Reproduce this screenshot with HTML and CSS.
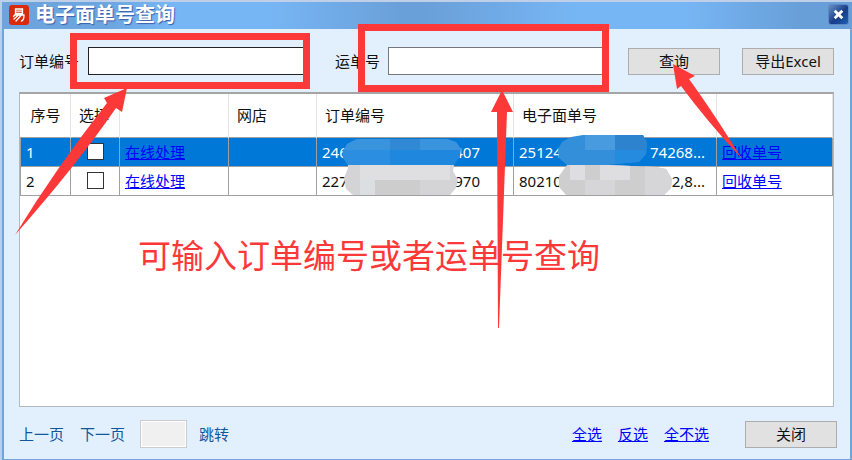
FILE: index.html
```html
<!DOCTYPE html>
<html lang="zh-CN">
<head>
<meta charset="utf-8">
<title>电子面单号查询</title>
<link rel="stylesheet" href="styles.css">
</head>
<body>
<div class="window">
  <header class="titlebar">
    <svg class="logo" viewBox="0 0 20 20" aria-hidden="true">
      <rect width="20" height="20" rx="3" fill="#d92a0c"/>
      <path d="M6.500 4h7v4.500h-7zM6.500 6.200h7M7 8.500L4.500 11.500M6.500 10h8.500c0 3-.6 5.500-2.500 6M9 10.500L5 14M12 10.500L7 16" fill="none" stroke="#fff" stroke-width="1.300" stroke-linecap="round"/>
    </svg>
    <h1>电子面单号查询</h1>
    <button class="close" type="button" aria-label="关闭窗口">
      <svg viewBox="0 0 20 20" aria-hidden="true"><path d="M6 6l8 8M14 6l-8 8" stroke="#fff" stroke-width="3"/></svg>
    </button>
  </header>
  <main>
    <form class="search">
      <label for="order">订单编号</label>
      <input class="order" id="order" type="text">
      <label class="waybill-label" for="waybill">运单号</label>
      <input id="waybill" type="text">
      <div class="actions">
        <button class="btn" type="button">查询</button>
        <button class="btn" type="button">导出<span class="latin">Excel</span></button>
      </div>
    </form>
    <div class="grid">
      <table>
        <colgroup><col class="c-no"><col class="c-pick"><col class="c-do"><col class="c-shop"><col class="c-order"><col class="c-bill"><col></colgroup>
        <thead>
          <tr><th>序号</th><th>选择</th><th></th><th>网店</th><th>订单编号</th><th>电子面单号</th><th></th></tr>
        </thead>
        <tbody>
          <tr class="selected">
            <td>1</td>
            <td class="pick"><input type="checkbox" aria-label="选择第1行"></td>
            <td><a href="#">在线处理</a></td>
            <td></td>
            <td><div class="number"><span>246</span><span>407</span></div></td>
            <td><div class="number long"><span>25124</span><span>74268...</span></div></td>
            <td><a href="#">回收单号</a></td>
          </tr>
          <tr>
            <td>2</td>
            <td class="pick"><input type="checkbox" aria-label="选择第2行"></td>
            <td><a href="#">在线处理</a></td>
            <td></td>
            <td><div class="number"><span>227</span><span>970</span></div></td>
            <td><div class="number long"><span>80210</span><span>2,8...</span></div></td>
            <td><a href="#">回收单号</a></td>
          </tr>
        </tbody>
      </table>
    </div>
    <footer>
      <button class="page" type="button">上一页</button>
      <button class="page" type="button">下一页</button>
      <input class="jump" type="text" aria-label="页码">
      <button class="page" type="button">跳转</button>
      <nav><a href="#">全选</a><a href="#">反选</a><a href="#">全不选</a></nav>
      <button class="btn" type="button">关闭</button>
    </footer>
  </main>
</div>
<svg class="marks" width="852" height="460" viewBox="0 0 852 460" aria-hidden="true">
  <defs>
    <clipPath id="m1"><path d="M357 139H447L456 142L461 149L460 156L454 165H348L343 158V151L347 144Z"/></clipPath>
    <clipPath id="m2"><path d="M348 165H454L453 171L458 180L456 188L450 195H353L346 189L344 178L348 168Z"/></clipPath>
    <clipPath id="m3"><path d="M583 135H643L647 143L646 154L639 162L626 163L608 165H567L559 158L558 149L562 142L571 137Z"/></clipPath>
    <clipPath id="m4"><path d="M567 165H608L656 167L666 169L672 179L671 188L664 195H566L559 187V176Z"/></clipPath>
  </defs>
  <g clip-path="url(#m1)">
    <path fill="#1f87de" d="M340 135h130v32H340z"/><path fill="#3994dd" d="M340 135h130v15H340z"/>
    <path fill="#2c8ee0" d="M340 150h50v17h-50z"/><path fill="#3189d6" d="M390 139h30v11h-30z"/>
  </g>
  <g clip-path="url(#m2)">
    <path fill="#d4d4d6" d="M340 165h125v31H340z"/><path fill="#dfdfe2" d="M360 165h90v15h-90z"/><path fill="#dcdee2" d="M360 180h15v15h-15z"/><path fill="#cdcdce" d="M375 180h45v15h-45z"/>
  </g>
  <g clip-path="url(#m3)">
    <path fill="#348fdb" d="M555 133h100v34H555z"/><path fill="#489bde" d="M585 133h30v17h-30z"/><path fill="#2d83cd" d="M615 133h40v17h-40z"/><path fill="#258bdf" d="M615 150h40v17h-40z"/>
  </g>
  <g clip-path="url(#m4)">
    <path fill="#cecece" d="M555 165h120v31H555z"/><path fill="#dedee0" d="M570 165h15v15h-15zM600 165h30v15h-30z"/><path fill="#d6d6d8" d="M585 180h30v15h-30zM645 165h30v30h-30z"/>
  </g>
  <g fill="none" stroke="#fd3838" stroke-width="7">
    <path d="M73.500 36.500h233v49h-233zM361.500 27.500h244v61h-244z"/>
  </g>
  <g fill="#fd3838">
    <path d="M127 88L122 112L116 108Q76 166 15 235Q56 168 107 103L104 98Z"/>
    <path d="M502 90L513 112H507L499 328H498L497 112H491Z"/>
    <path d="M673 64L695 76L689 79Q713 112 742 159Q706 120 681 86L677 89Z"/>
  </g>
</svg>
<p class="note">可输入订单编号或者运单号查询</p>
</body>
</html>
```
FILE: styles.css
```css
* { box-sizing: border-box; }

body {
  margin: 0;
  position: relative;
  font-family: "Noto Sans CJK SC", sans-serif;
  font-size: 15px;
  line-height: 20px;
  color: #111;
}

button, input { font: inherit; color: inherit; margin: 0; }
a { color: #00f; }

.window {
  min-height: 100vh;
  display: flex;
  flex-direction: column;
  padding: 2px 2px 1px 4px;
  background: linear-gradient(90deg, #b9cfee 2px, #6fa5dc 2px);
}

.titlebar {
  display: flex;
  align-items: center;
  height: 27px;
  margin: 0 -2px;
  padding: 0 3px 2px 7px;
  box-shadow: 0 -2px #c0cfe8;
  background: linear-gradient(90deg, #6ea3dd 0%, #6ba5df 12%, #77b6f5 20%, #77b6f5 31%, #6aa0d9 47%, #6aa0d9 50%, #77b6f5 68%, #77b6f5 80%, #689fd8 94%);
}

.logo { width: 20px; height: 20px; }

h1 {
  margin: 0 auto 2px 6px;
  font-size: 20px;
  line-height: 23px;
  font-weight: 700;
  color: #fff;
  text-shadow: 1px 1px 1px #3c5fae;
}

.close {
  width: 21px;
  height: 21px;
  padding: 0;
  border: 1px solid #5d8ac6;
  border-radius: 3px;
  background: linear-gradient(135deg, #6b91c6, #163d87 55%, #1d60b5);
}
.close svg { display: block; width: 100%; }

main {
  flex: 1;
  display: flex;
  flex-direction: column;
  background: #e2f0fe;
  padding: 17px 16px 11px 15px;
}

.search { display: flex; align-items: center; height: 30px; }
.search input {
  flex: 0 1 216px;
  min-width: 0;
  height: 28px;
  border: 1px solid #777;
  background: #fff;
}
.search .order { margin: 0 31px 0 9px; border: 1px solid #222; }
.waybill-label { margin-right: 8px; }
.actions { display: flex; gap: 22px; margin-left: auto; }

.btn {
  width: 92px;
  height: 27px;
  padding: 0;
  border: 1px solid #adadad;
  background: #e1e1e1;
}
.latin { font-family: "Noto Sans", sans-serif; }

.grid {
  flex: 1;
  margin-top: 16px;
  border: 1px solid #b4b8bf;
  border-top: 2px solid #a5a5a7;
  background: #fff;
}

table { width: 100%; border-collapse: collapse; table-layout: fixed; }
.c-no { width: 50px; }
.c-pick { width: 49px; }
.c-do { width: 109px; }
.c-shop { width: 88px; }
.c-order { width: 197px; }
.c-bill { width: 203px; }

th {
  height: 43px;
  padding: 0 8px;
  font-weight: 400;
  text-align: left;
  border-right: 1px solid #e4e4e4;
}
th:first-child { padding-left: 10px; }
td {
  height: 29px;
  padding: 0 5px;
  border: 1px solid #a0a0a0;
  white-space: nowrap;
}
td:first-child, .number { font-family: "Noto Sans", sans-serif; }
.selected td { background: #0078d7; color: #fff; }

.pick { text-align: center; }
.pick input {
  appearance: none;
  display: block;
  width: 17px;
  height: 17px;
  margin: 0 auto;
  border: 1px solid #333;
  background: #fff;
}

.number { display: flex; justify-content: space-between; width: 158px; }
.long { width: 186px; }

footer { display: flex; align-items: center; height: 28px; margin-top: 13px; }
.page { padding: 0; border: 0; background: none; color: #12569b; }
.page + .page { margin-left: 16px; }
.jump {
  width: 47px;
  height: 28px;
  margin: 0 12px 0 15px;
  border: 1px solid #ccc;
  background: #f0f0f0;
  box-shadow: inset 0 0 0 1px #fff;
}
nav { display: flex; gap: 16px; margin: 0 36px 0 auto; }
footer .btn { margin-right: -3px; }

.marks, .note { position: absolute; pointer-events: none; }
.marks { left: 0; top: 0; }
.note {
  left: 138px;
  top: 234px;
  margin: 0;
  font-size: 33px;
  line-height: 40px;
  white-space: nowrap;
  color: #fd3838;
}
```
